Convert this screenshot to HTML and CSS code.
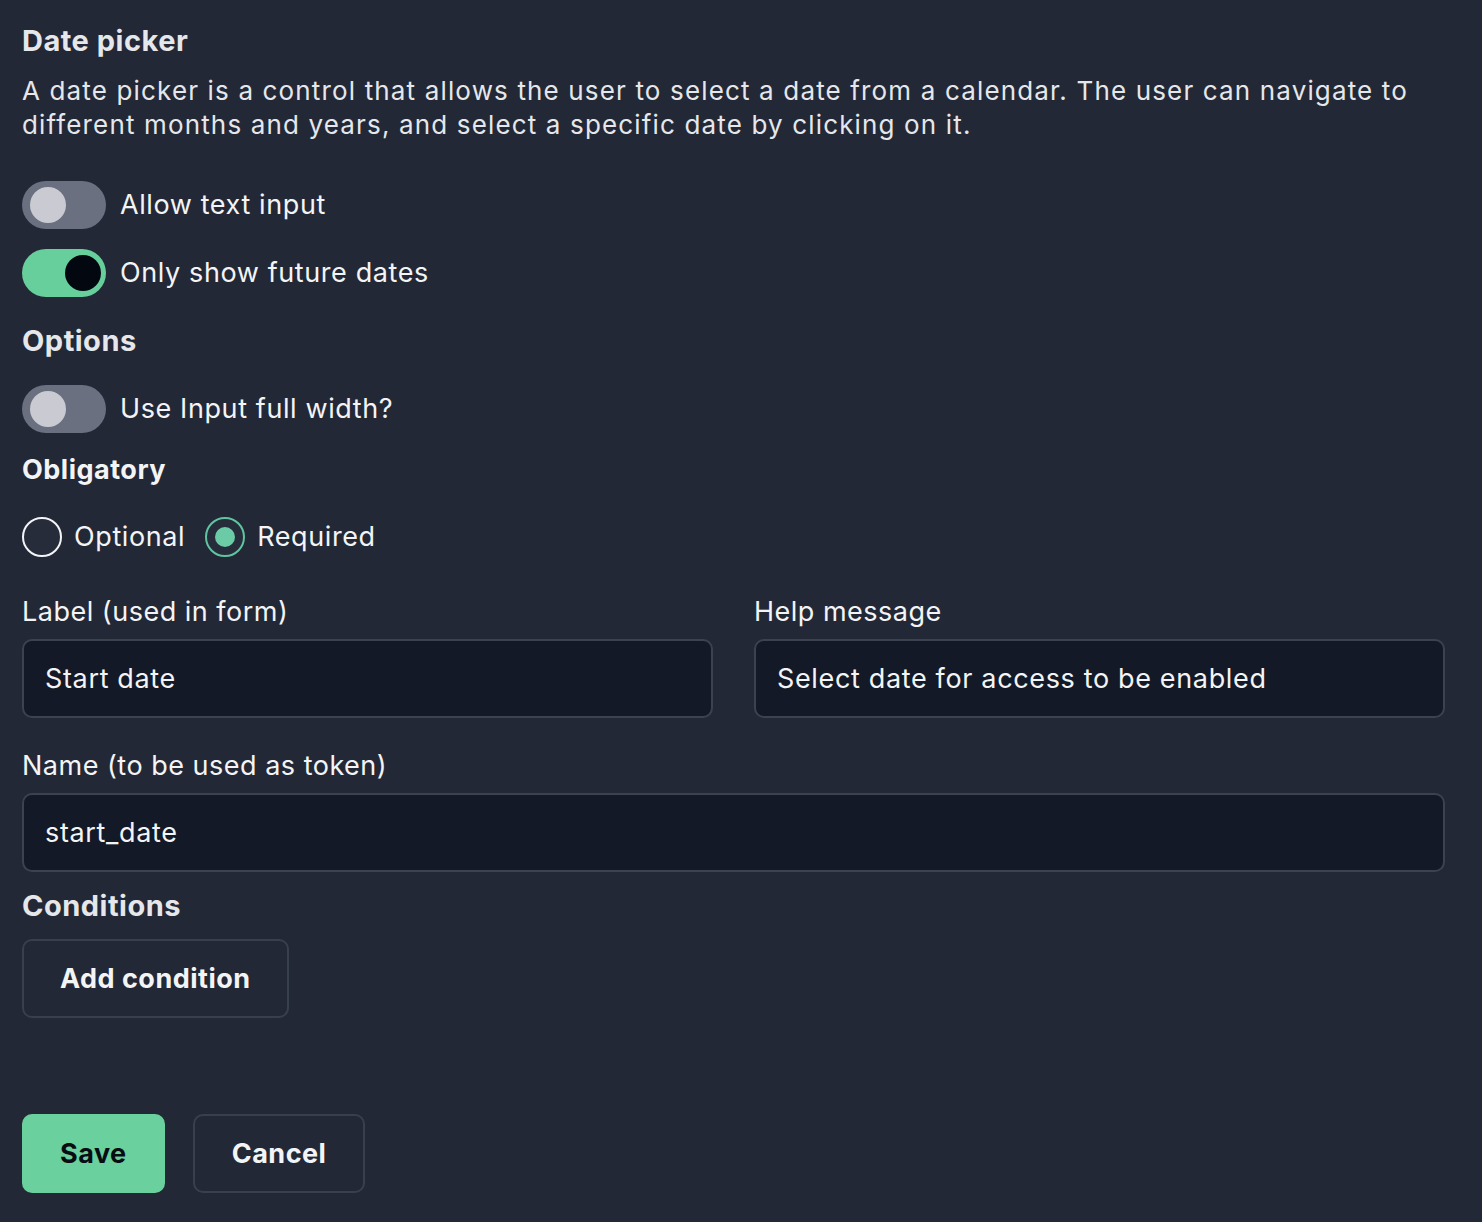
FILE: index.html
```html
<!DOCTYPE html>
<html lang="en">
<head>
    <meta charset="UTF-8">
    <meta name="viewport" content="width=device-width, initial-scale=1.0">
    <title>Date picker - Field settings</title>
    <link rel="stylesheet" href="styles.css">
</head>
<body>
    <div class="panel">
        <h2 class="title">Date picker</h2>
        <p class="desc">A date picker is a control that allows the user to select a date from a calendar. The user can navigate to different months and years, and select a specific date by clicking on it.</p>

        <label class="switch-row first">
            <span class="switch"><span class="knob"></span></span>
            <span>Allow text input</span>
        </label>
        <label class="switch-row">
            <span class="switch on"><span class="knob"></span></span>
            <span>Only show future dates</span>
        </label>

        <h3 class="section">Options</h3>
        <label class="switch-row tight">
            <span class="switch"><span class="knob"></span></span>
            <span>Use Input full width?</span>
        </label>

        <h3 class="section obligatory">Obligatory</h3>
        <div class="radios">
            <label class="radio-item">
                <span class="radio"></span>
                <span>Optional</span>
            </label>
            <label class="radio-item">
                <span class="radio checked"></span>
                <span>Required</span>
            </label>
        </div>

        <div class="field-grid">
            <div class="field">
                <div class="field-label">Label (used in form)</div>
                <div class="input">Start date</div>
            </div>
            <div class="field">
                <div class="field-label">Help message</div>
                <div class="input">Select date for access to be enabled</div>
            </div>
        </div>

        <div class="field name-field">
            <div class="field-label">Name (to be used as token)</div>
            <div class="input">start_date</div>
        </div>

        <h3 class="section conditions">Conditions</h3>
        <div>
            <button class="btn btn-outline add">Add condition</button>
        </div>

        <div class="actions">
            <button class="btn btn-primary">Save</button>
            <button class="btn btn-outline">Cancel</button>
        </div>
    </div>
</body>
</html>
```

FILE: styles.css
```css
* {
    margin: 0;
    padding: 0;
    box-sizing: border-box;
}

body {
    font-family: Inter, 'Noto Sans', sans-serif;
    background: #232836;
    min-height: 100vh;
    color: #f3f4f6;
}

.panel {
    padding: 21px 37px 30px 22px;
}

.title {
    font-size: 29px;
    font-weight: 700;
    line-height: 40px;
    letter-spacing: 0.5px;
    color: #e5e7eb;
}

.desc {
    margin-top: 13px;
    font-size: 26px;
    line-height: 34px;
    color: #e5e7eb;
    letter-spacing: 1.15px;
}

.switch-row {
    display: flex;
    align-items: center;
    gap: 14px;
    margin-top: 20px;
    font-size: 27px;
    line-height: 48px;
    letter-spacing: 0.6px;
}

.switch-row.first {
    margin-top: 39px;
}

.switch-row.tight {
    margin-top: 24px;
}

.switch {
    width: 84px;
    height: 48px;
    border-radius: 24px;
    background: #6b7080;
    display: flex;
    align-items: center;
    padding: 0 8px;
}

.switch .knob {
    width: 36px;
    height: 36px;
    border-radius: 50%;
    background: #cacbd2;
}

.switch.on {
    background: #66cf9b;
    justify-content: flex-end;
    padding: 0 5px;
}

.switch.on .knob {
    background: #03070f;
}

.section {
    margin-top: 24px;
    font-size: 29px;
    font-weight: 700;
    line-height: 40px;
    letter-spacing: 0.5px;
    color: #e5e7eb;
}

.section.obligatory {
    margin-top: 17px;
    font-size: 27px;
    color: #f3f4f6;
}

.section.conditions {
    margin-top: 14px;
}

.radios {
    display: flex;
    align-items: center;
    gap: 20px;
    margin-top: 27px;
}

.radio-item {
    display: flex;
    align-items: center;
    gap: 12px;
    font-size: 27px;
    line-height: 40px;
    letter-spacing: 0.6px;
}

.radio {
    width: 40px;
    height: 40px;
    border-radius: 50%;
    border: 2px solid #f3f4f6;
    background: #262c3a;
    display: flex;
    align-items: center;
    justify-content: center;
}

.radio.checked {
    border-color: #5fc4a0;
}

.radio.checked::after {
    content: "";
    width: 20px;
    height: 20px;
    border-radius: 50%;
    background: #6acba6;
}

.field-grid {
    display: grid;
    grid-template-columns: 1fr 1fr;
    gap: 41px;
    margin-top: 38px;
}

.field-label {
    font-size: 27px;
    line-height: 34px;
    letter-spacing: 0.5px;
    margin-bottom: 10px;
}

.input {
    height: 79px;
    border: 2px solid #3b4250;
    border-radius: 10px;
    background: #131926;
    padding: 0 21px;
    display: flex;
    align-items: center;
    font-size: 27px;
    letter-spacing: 0.65px;
}

.name-field {
    margin-top: 31px;
}

.btn {
    font-family: Inter, 'Noto Sans', sans-serif;
    font-size: 27px;
    font-weight: 700;
    letter-spacing: 0.5px;
    height: 79px;
    border-radius: 10px;
    cursor: pointer;
    color: #f3f4f6;
}

.btn-outline {
    background: transparent;
    border: 2px solid #383f4d;
    padding: 0 36px;
}

.btn.add {
    margin-top: 13px;
}

.btn-primary {
    background: #6ad09d;
    border: none;
    color: #080d14;
    padding: 0 38px;
}

.actions {
    display: flex;
    gap: 28px;
    margin-top: 96px;
}

.actions .btn-outline {
    padding: 0 37px;
}
```
